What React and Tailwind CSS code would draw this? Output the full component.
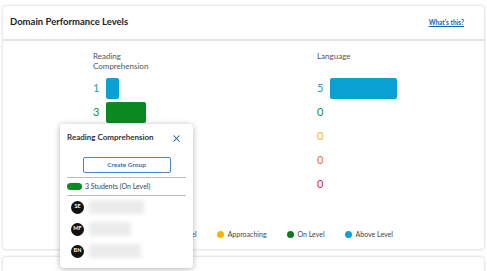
import { X } from "lucide-react";

const reading = [
    { value: 1, color: "text-[#1a9bd0]", bar: "bg-[#0aa0d4]" },
    { value: 3, color: "text-[#1b8a3c]", bar: "bg-[#0b8a22]" },
    { value: 0, color: "text-[#f4b400]", bar: "" },
    { value: 0, color: "text-[#f26b2a]", bar: "" },
    { value: 0, color: "text-[#e3262a]", bar: "" },
];

const language = [
    { value: 5, color: "text-[#1a9bd0]", bar: "bg-[#0aa0d4]" },
    { value: 0, color: "text-[#1b8a3c]", bar: "" },
    { value: 0, color: "text-[#f4b400]", bar: "" },
    { value: 0, color: "text-[#f26b2a]", bar: "" },
    { value: 0, color: "text-[#e3262a]", bar: "" },
];

const legend = [
    { label: "Far Below Level", dot: "bg-[#e3262a]" },
    { label: "Below Level", dot: "bg-[#f26b2a]" },
    { label: "Approaching", dot: "bg-[#f7b500]" },
    { label: "On Level", dot: "bg-[#0b7d1f]" },
    { label: "Above Level", dot: "bg-[#0aa0d4]" },
];

const students = [
    { initials: "SE", w: "w-[55px]" },
    { initials: "MF", w: "w-[42px]" },
    { initials: "BN", w: "w-[52px]" },
];

function Domain({ label, rows }) {
    return (
        <div className="flex flex-col">
            <div className="h-[27px] text-[8px] leading-[10px] text-[#555]">{label}</div>
            <div className="flex flex-col gap-[3px]">
                {rows.map((r, i) => (
                    <div key={i} className="flex items-center h-[21px]">
                        <span className={`w-[13px] text-[11px] ${r.color}`}>{r.value}</span>
                        {r.value > 0 && (
                            <div
                                className={`h-[21px] rounded-[2px] ${r.bar}`}
                                style={{ width: r.value * 13.4 }}
                            />
                        )}
                    </div>
                ))}
            </div>
        </div>
    );
}

export default function App() {
    return (
        <div className="relative w-[487px] h-[271px] bg-white overflow-hidden font-['Lato',sans-serif]">
            <div className="pt-[6px] px-[3px] flex flex-col gap-[8px]">
                <div className="h-[243px] bg-white rounded-[3px] shadow-[0_0_3px_rgba(0,0,0,0.25)] flex flex-col">
                    <div className="h-[35px] flex items-center justify-between px-[7px] border-b-2 border-[#e3e6e8]">
                        <h2 className="text-[9.5px] font-bold text-[#222]">Domain Performance Levels</h2>
                        <a className="text-[6.5px] font-bold text-[#1a5fb4] underline mr-[13px]">What's this?</a>
                    </div>
                    <div className="grid grid-cols-[224px_1fr] pl-[90px] pt-[10px]">
                        <Domain label={<>Reading<br />Comprehension</>} rows={reading} />
                        <Domain label="Language" rows={language} />
                    </div>
                    <div className="flex justify-center gap-[20px] mt-[34px] pr-[24px] text-[7px] text-[#444]">
                        {legend.map((l) => (
                            <div key={l.label} className="flex items-center gap-[4px]">
                                <span className={`w-[7px] h-[7px] rounded-full ${l.dot}`} />
                                {l.label}
                            </div>
                        ))}
                    </div>
                </div>
                <div className="h-[40px] bg-white rounded-[3px] shadow-[0_0_3px_rgba(0,0,0,0.25)]" />
            </div>

            <div className="absolute left-[60px] top-[124px] w-[133px] h-[144px] bg-white rounded-[4px] shadow-[0_1px_6px_rgba(0,0,0,0.3)] px-[7px] pt-[6px]">
                <div className="flex items-center justify-between">
                    <span className="text-[8px] font-bold text-[#333]">Reading Comprehension</span>
                    <X className="w-[11px] h-[11px] text-[#1a5fb4] mr-[4px] mt-[3px]" strokeWidth={2.2} />
                </div>
                <div className="flex justify-center mt-[13px]">
                    <button className="w-[88px] h-[16px] border border-[#4a86c8] rounded-[2px] text-[6.5px] text-[#1a5fb4] font-semibold">
                        Create Group
                    </button>
                </div>
                <div className="mt-[4px] border-t border-[#bbb]" />
                <div className="flex items-center gap-[3px] h-[17px]">
                    <span className="w-[15px] h-[7px] rounded-full bg-[#0b8a22]" />
                    <span className="text-[7px] text-[#444]">3 Students (On Level)</span>
                </div>
                <div className="border-t border-[#bbb]" />
                <div className="flex flex-col gap-[8px] mt-[4px] pl-[4px]">
                    {students.map((s) => (
                        <div key={s.initials} className="flex items-center gap-[5px] h-[14px]">
                            <span className="w-[13px] h-[13px] shrink-0 rounded-full bg-[#111] text-white text-[5.5px] leading-none font-bold flex items-center justify-center">
                                {s.initials}
                            </span>
                            <span className={`h-[14px] ${s.w} bg-[#ebebeb] blur-[2px]`} />
                        </div>
                    ))}
                </div>
            </div>
        </div>
    );
}
